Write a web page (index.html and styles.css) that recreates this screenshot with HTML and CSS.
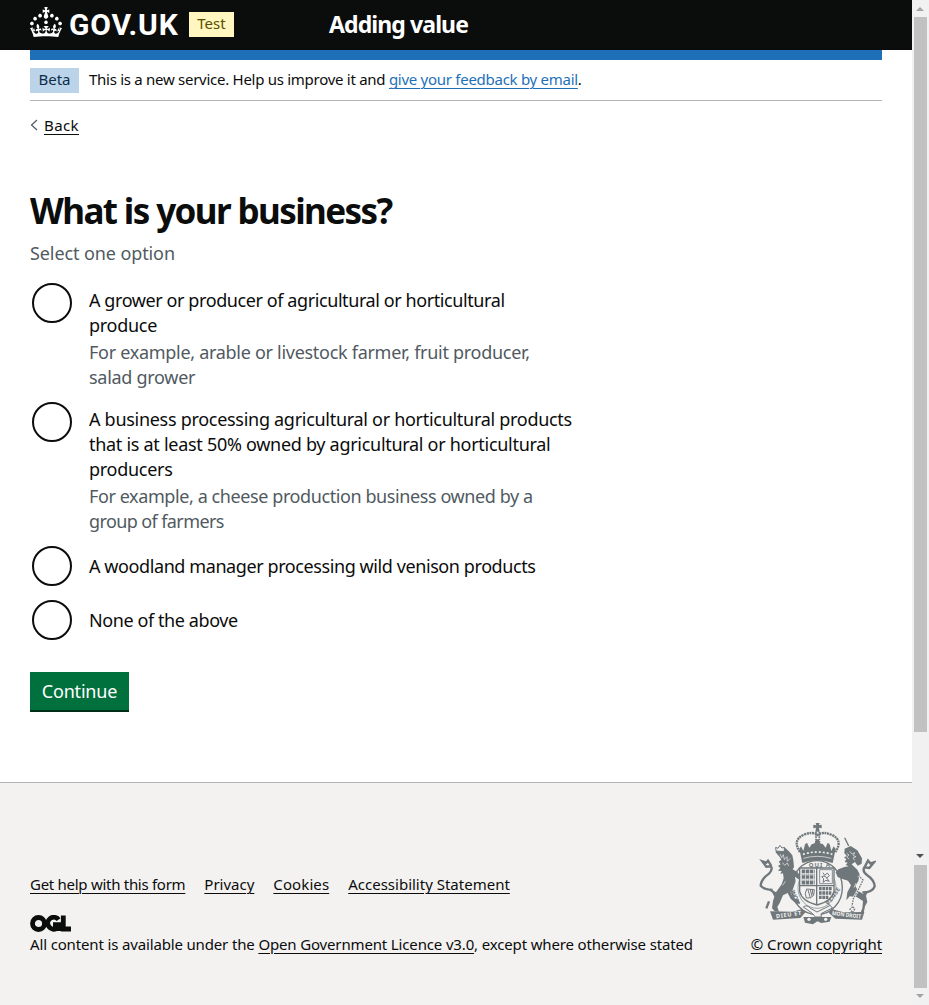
FILE: index.html
```html
<!DOCTYPE html>
<html lang="en">
<head>
<meta charset="utf-8">
<title>What is your business? - Adding value - GOV.UK</title>
<link rel="stylesheet" href="styles.css">
</head>
<body>
<div class="window">
<div class="page">
  <header class="header">
    <div class="brand">
      <svg class="crown" viewBox="0 0 32 30" fill="#fff" aria-hidden="true"><path d="M22.6 10.4c-1 .4-2-.1-2.4-1-.4-.9.1-2 1-2.4.9-.4 2 .1 2.4 1s-.1 2-1 2.4m-5.9 6.7c-.9.4-2-.1-2.4-1-.4-.9.1-2 1-2.4.9-.4 2 .1 2.4 1s-.1 2-1 2.4m10.8-3.7c-1 .4-2-.1-2.4-1-.4-.9.1-2 1-2.4.9-.4 2 .1 2.4 1s0 2-1 2.4m3.3 4.8c-1 .4-2-.1-2.4-1-.4-.9.1-2 1-2.4.9-.4 2 .1 2.4 1s-.1 2-1 2.4M17 4.7l2.3 1.2V2.5l-2.3.7-.2-.2.9-3h-3.4l.9 3-.2.2c-.1.1-2.3-.7-2.3-.7v3.4L15 4.7c.1.1.1.2.2.2l-1.3 4c-.1.2-.1.4-.1.6 0 1.1.8 2 1.9 2.2h.7c1-.2 1.9-1.1 1.9-2.1 0-.2 0-.4-.1-.6l-1.3-4c-.1-.2 0-.2.1-.3m-7.6 5.7c.9.4 2-.1 2.4-1 .4-.9-.1-2-1-2.4-.9-.4-2 .1-2.4 1s0 2 1 2.4m-5 3c.9.4 2-.1 2.4-1 .4-.9-.1-2-1-2.4-.9-.4-2 .1-2.4 1s.1 2 1 2.4m-3.2 4.8c.9.4 2-.1 2.4-1 .4-.9-.1-2-1-2.4-.9-.4-2 .1-2.4 1s0 2 1 2.4m14.8 11c4.4 0 8.6.3 12.3.8 1.1-4.5 2.4-7 3.7-8.8l-2.5-.9c.2 1.3.3 1.9 0 2.7-.4-.4-.8-1.1-1.1-2.3l-1.2 4c.7-.5 1.3-.8 2-.9-1.1 2.5-2.6 3.1-3.5 3-1.1-.2-1.7-1.2-1.5-2.1.3-1.2 1.5-1.5 2.1-.1 1.1-2.3-.8-3-2-2.3 1.9-1.9 2.1-3.5.6-5.6-2.1 1.6-2.1 3.2-1.2 5.5-1.2-1.4-3.2-.6-2.5 1.6.9-1.4 2.1-.5 1.9.8-.2 1.1-1.7 2.1-3.5 1.9-2.7-.2-2.9-2.1-2.9-3.6.7-.1 1.9.5 2.9 1.9l.4-4.3c-1.1 1.1-2.1 1.4-3.2 1.4.4-1.2 2.1-3 2.1-3h-5.4s1.7 1.9 2.1 3c-1.1 0-2.1-.2-3.2-1.4l.4 4.3c1-1.4 2.2-2 2.9-1.9-.1 1.5-.2 3.4-2.9 3.6-1.9.2-3.4-.8-3.5-1.9-.2-1.3 1-2.2 1.9-.8.7-2.3-1.2-3-2.5-1.6.9-2.2.9-3.9-1.2-5.5-1.5 2-1.3 3.7.6 5.6-1.2-.7-3.1 0-2 2.3.6-1.4 1.8-1.1 2.1.1.2.9-.3 1.9-1.5 2.1-.9.2-2.4-.5-3.5-3 .6 0 1.2.3 2 .9l-1.2-4c-.3 1.1-.7 1.9-1.1 2.3-.3-.8-.2-1.4 0-2.7l-2.9.9C1.3 23 2.6 25.5 3.7 30c3.7-.5 7.9-.8 12.3-.8"/></svg>
      <span class="wordmark">GOV.UK</span>
      <span class="tag tag-test">Test</span>
    </div>
    <span class="service">Adding value</span>
  </header>
  <div class="container">
    <div class="bar"></div>
    <div class="phase">
      <span class="tag tag-beta">Beta</span>
      <span class="phase-text">This is a new service. Help us improve it and <a class="link-blue" href="#">give your feedback by email</a>.</span>
    </div>
    <div class="back">
      <svg class="chevron" viewBox="0 0 8 12" fill="none" stroke="#505a5f" stroke-width="1.2"><path d="M7 1 1.5 6 7 11"/></svg>
      <a class="link loose" href="#">Back</a>
    </div>
    <main class="main">
      <h1 class="title">What is your business?</h1>
      <p class="hint lead">Select one option</p>
      <div class="radios">
        <label class="radio"><span class="circle"></span><span class="copy"><span class="label"><span class="tight">A grower or producer of agricultural or horticultural</span><br>produce</span><span class="hint">For example, arable or livestock farmer, fruit producer,<br>salad grower</span></span></label>
        <label class="radio"><span class="circle"></span><span class="copy"><span class="label">A business processing agricultural or horticultural products<br>that is at least 50% owned by agricultural or horticultural<br>producers</span><span class="hint tight">For example, a cheese production business owned by a<br><span class="tighter">group of farmers</span></span></span></label>
        <label class="radio single"><span class="circle"></span><span class="copy"><span class="label tight">A woodland manager processing wild venison products</span></span></label>
        <label class="radio single"><span class="circle"></span><span class="copy"><span class="label tight">None of the above</span></span></label>
      </div>
      <button class="button">Continue</button>
    </main>
  </div>
  <footer class="footer">
    <div class="footer-meta">
      <nav class="footer-links">
        <a class="link snug" href="#">Get help with this form</a>
        <a class="link" href="#">Privacy</a>
        <a class="link wide" href="#">Cookies</a>
        <a class="link" href="#">Accessibility Statement</a>
      </nav>
      <svg class="ogl" viewBox="0 0 41 17" role="img" aria-label="OGL" fill="none" stroke="#0b0c0c" stroke-width="4.8"><circle cx="8.5" cy="8.5" r="6"/><path d="M28.6 4.6A6 6 0 1 0 27.2 13.2M23 9.6H28.6V16M33.3.5V14H41"/></svg>
      <p class="licence">All content is available under the <a class="link" href="#">Open Government Licence v3.0</a>, except where otherwise stated</p>
    </div>
    <div class="copyright">
      <svg class="crest" viewBox="54 36 354 312" aria-hidden="true">
        <ellipse cx="231" cy="233" rx="76" ry="81" fill="#f3f2f1" stroke="#6f777b" stroke-width="4"/>
        <ellipse cx="231" cy="233" rx="57" ry="62" fill="none" stroke="#6f777b" stroke-width="2"/>
        <g fill="#6f777b">
          <path d="M227 39h12l-2 7 8-2v11l-8-2 2 12h-13l2-12-8 2V44l9 2z"/>
          <path d="M178 117l5-8 7 14 5-20 6-5 7 15 7-10 9-3 4-12 8 0 4 12 9 3 8 10 6-15 6 5 5 20 7-14 6 8-9 42q-47-17-91 0z"/>
        </g>
        <g fill="none" stroke="#6f777b">
          <path d="M180 126Q156 91 190 75q28-12 43 0 16-12 43 0 34 16 10 51" stroke-width="7" stroke-dasharray="6 2"/>
          <path d="M228 65v35M238 65v35" stroke-width="5" stroke-dasharray="5 2"/>
        </g>
        <path d="M189 133q43-14 88 0" fill="none" stroke="#f3f2f1" stroke-width="5" stroke-dasharray="6 6"/>
        <path d="M190 145q42-12 84 0" fill="none" stroke="#f3f2f1" stroke-width="2"/>
        <g fill="#6f777b">
          <path d="M106 126l10-12 20 0 13 12 8 10 3 15 2 20-4 7 15 9 14 19-4 7-18-13 2 14-8 23-8 9 9 18 16 6 4 12-14-3-14-13-9-17-14 7-10 23-7 12 5 15-13-2-8-9 3-22 4-13-6-12-8-6 9-1 10 6 17-24 6-18-2-15-8 2 4-9-11-1 7-8-7-6 8-5-6-8 8-6-5-8z"/>
          <path d="M314 116l18-8 20 13 14 24-1 16-12 6-8-11-10 7 17 16 7 14-4 20-9 15 8 14 15 10 7-9 7 3-5 11 4 19-7 13-4 21-11 2 7-17 2-22-19-12-21-2-10 12 3-24 11-21-9-14-17-5-14-6-6-14 8-9 18-7 13-2-9-4 6-7-9-2 5-9-7-4 8-6-7-7z"/>
          <path d="M90 304l9 25 82-5 16-18-11-9-28 8z"/>
          <path d="M373 306l-7 23-80-3-20-18 11-10 34 9z"/>
          <path d="M190 321h84l-5 14-25 4-12-5-13 9-24-5z"/>
        </g>
        <g fill="none" stroke="#6f777b" stroke-width="7">
          <path d="M98 240q-28-1-36-13 2-20 25-36 12-13 6-22l-14 1-12-16 12 4 5-6 9 14M87 274l-8 21"/>
          <path d="M367 247q31 0 37-18-1-19-23-34-15-11-8-23l15 2 14-17-11 3-7-8-9 17"/>
        </g>
        <path d="M314 83l12 25" fill="none" stroke="#6f777b" stroke-width="4"/>
        <path d="M108 123l-1-11 7 3 6-9 6 8 8-2-2 13z" fill="#f3f2f1" stroke="#6f777b" stroke-width="3"/>
        <path d="M179 174h103v70q-7 30-51 41-45-11-52-41z" fill="#f3f2f1" stroke="#6f777b" stroke-width="4"/>
        <g fill="none" stroke="#6f777b">
          <path d="M230 172v112M178 227h105" stroke-width="4"/>
          <path d="M185 184h39M185 201h39M185 218h39" stroke-width="11" stroke-dasharray="10 2"/>
          <path d="M185 193h39M185 210h39" stroke-width="3" stroke-dasharray="3 3"/>
          <path d="M239 179h38v42h-38z" stroke-width="2.5"/>
          <path d="M249 188l5 8 8-7 6 8-8 7 8 10-10-3-9 6 2-11-6-6 7-2 9 5" stroke-width="3"/>
          <path d="M200 237q-8 15-1 27 14 3 22-8l2-17zM204 240l7 23M211 240l5 18M217 240l2 14" stroke-width="3"/>
          <path d="M237 236h40M237 249h37M237 262h28" stroke-width="10" stroke-dasharray="8 2"/>
          <path d="M355 196l14 14-12 25-17 31-4 22" stroke="#f3f2f1" stroke-width="7"/>
          <path d="M355 196l14 14-12 25-17 31-4 22M338 290l-8 8 8 10 6-11z" stroke-width="4" stroke-dasharray="5 3"/>
        </g>
        <path d="M190 291q10-9 23 5l18 10 40-20 6 8-34 17 1 10h-18l-9-11z" fill="#f3f2f1" stroke="#6f777b" stroke-width="3"/>
        <g fill="none" stroke="#f3f2f1" stroke-width="2">
          <path d="M120 132l5 11 5-9 3 15 8-9 1 14 9-9M128 158l6 8 8-7 4 9M128 226l8-12M329 124l7 8 8-4-4 9 8 3-9 4 5 7M320 130l7 5-7 6 7 6M348 219l-6 14"/>
        </g>
        <circle cx="207" cy="328" r="5" fill="#f3f2f1"/><circle cx="257" cy="328" r="5" fill="#f3f2f1"/>
        <g class="motto">
          <text x="206" y="171" textLength="64">QUI A</text>
          <text transform="translate(181 278) rotate(-116)" textLength="44">HONI</text>
          <text transform="translate(267 287) rotate(-55)" textLength="60">PENSE</text>
          <text class="motto-light" transform="translate(109 325) rotate(-8)" textLength="76">DIEU ET</text>
          <text class="motto-light" transform="translate(275 315) rotate(7)" textLength="88" lengthAdjust="spacingAndGlyphs">MON DROIT</text>
        </g>
      </svg>
      <a class="link" href="#">© Crown copyright</a>
    </div>
  </footer>
</div>
<div class="scroll">
  <i class="arrow up"></i><i class="thumb thumb-main"></i>
  <i class="arrow down dark"></i><i class="thumb thumb-low"></i><i class="arrow down"></i>
</div>
</div>
</body>
</html>
```
FILE: styles.css
```css
* { box-sizing: border-box; }
body { margin: 0; font-family: "Noto Sans", sans-serif; font-size: 15px; line-height: 20px; color: #0b0c0c; }
.window { display: flex; width: 929px; height: 1005px; overflow: hidden; background: #fff; }
.page { width: 912px; display: flex; flex-direction: column; white-space: nowrap; }
.header { height: 50px; padding-left: 30px; background: #0b0c0c; color: #fff; display: flex; }
.brand { width: 299px; display: flex; padding-top: 7px; }
.crown { width: 32px; height: 30px; }
.wordmark { margin-left: 7px; width: 120px; font: bold 30px/35px Roboto, sans-serif; letter-spacing: 0.8px; }
.service { font-weight: 700; font-size: 23px; line-height: 48px; letter-spacing: -0.9px; }
.tag { height: 25px; line-height: 23px; text-align: center; }
.tag-test { width: 45px; margin-top: 5px; background: #fff7bf; color: #594d00; }
.container { margin: 0 30px; height: 732px; }
.bar { height: 10px; background: #1d70b8; }
.phase { height: 41px; padding-top: 8px; border-bottom: 1px solid #b1b4b6; display: flex; gap: 10px; }
.tag-beta { width: 49px; background: #bbd4ea; color: #0c2d4a; }
.phase-text { line-height: 22px; letter-spacing: -0.275px; }
.link, .link-blue { color: #0b0c0c; text-decoration: underline; text-decoration-thickness: 1px; text-underline-offset: 3px; }
.link-blue { color: #1d70b8; }
.loose { letter-spacing: 0.4px; }
.back { display: flex; align-items: center; gap: 6px; margin-top: 14px; height: 20px; }
.chevron { width: 8px; height: 12px; }
.main { padding-top: 51px; }
.title { margin: 0; font-size: 35px; line-height: 50px; letter-spacing: -1.6px; }
.hint { color: #505a5f; }
.lead { margin: 5px 0 16px; letter-spacing: -0.1px; }
.lead, .copy { font-size: 18px; line-height: 25px; }
.radios { display: flex; flex-direction: column; gap: 10px; }
.radio { display: flex; min-height: 44px; padding-left: 2px; }
.circle { width: 40px; height: 40px; margin-top: 1px; border: 2px solid #0b0c0c; border-radius: 50%; }
.copy { display: flex; flex-direction: column; gap: 2px; margin-left: 17px; padding: 6px 0 1px; letter-spacing: -0.29px; }
.single .copy { padding-top: 9px; }
.tight { letter-spacing: -0.41px; }
.tighter { letter-spacing: -0.6px; }
.button { display: block; margin: 29px 0 0; width: 99px; height: 40px; padding: 0; border: 0; border-bottom: 2px solid #002d18; background: #00703c; color: #fff; font: 18px/38px "Noto Sans", sans-serif; letter-spacing: -0.2px; }
.footer { flex: 1; border-top: 1px solid #b1b4b6; background: #f3f2f1; padding: 0 30px; display: flex; justify-content: space-between; }
.footer-meta { padding-top: 91px; }
.footer-links { display: flex; gap: 19px; height: 20px; }
.snug { letter-spacing: -0.28px; }
.wide { letter-spacing: 0.1px; }
.ogl { display: block; width: 41px; height: 17px; margin-top: 21px; }
.licence { margin: 2px 0 0; letter-spacing: -0.15px; }
.copyright { padding-top: 39px; text-align: right; letter-spacing: -0.06px; }
.crest { display: block; width: 118px; height: 104px; margin: 0 6px 8px 7px; }
.motto { font: bold 18px "Noto Sans", sans-serif; fill: #6f777b; }
.motto-light { font-size: 17px; fill: #f3f2f1; }
.scroll { width: 17px; background: #f1f1f1; display: flex; flex-direction: column; align-items: center; padding-right: 1px; }
.arrow { width: 0; height: 0; border: 4px solid transparent; }
.up { border-top: 0; border-bottom-color: #a3a3a3; margin: 7px 0 6px; }
.down { border-bottom: 0; border-top-color: #a3a3a3; margin-top: 6px; }
.dark { border-top-color: #505050; margin: 122px 0 7px; }
.thumb { width: 13px; background: #c1c1c1; }
.thumb-main { height: 715px; }
.thumb-low { height: 123px; }
```
